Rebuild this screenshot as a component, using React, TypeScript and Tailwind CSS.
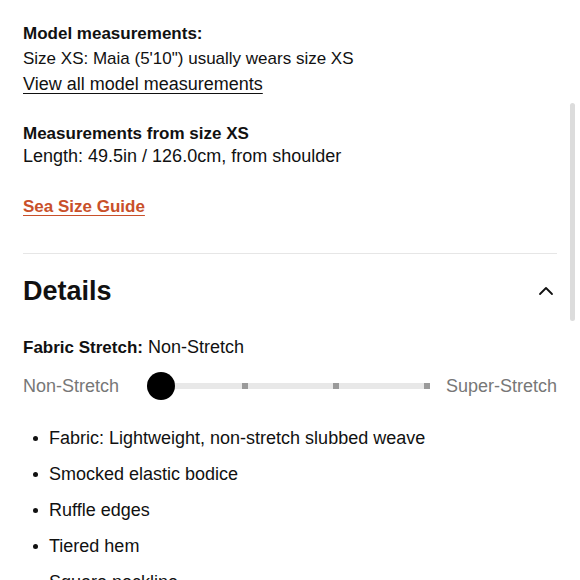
import { ChevronUp } from "lucide-react";

const bullets = [
  "Fabric: Lightweight, non-stretch slubbed weave",
  "Smocked elastic bodice",
  "Ruffle edges",
  "Tiered hem",
  "Square neckline",
];

function StretchSlider() {
  return (
    <div className="flex items-center h-[40px] text-[18px]">
      <span className="text-[#777] w-[137px]">Non-Stretch</span>
      <div className="relative flex-1 h-[28px] flex items-center">
        <div className="absolute left-[2px] right-[1px] h-[6px] bg-[#e8e8e8]" />
        <div className="absolute left-[82px] w-[6px] h-[6px] bg-[#9a9a9a]" />
        <div className="absolute left-[173px] w-[6px] h-[6px] bg-[#9a9a9a]" />
        <div className="absolute right-0 w-[6px] h-[6px] bg-[#9a9a9a]" />
        <div className="relative w-[28px] h-[28px] rounded-full bg-black -ml-[13px]" />
      </div>
      <span className="text-[#777] ml-[16px]">Super-Stretch</span>
    </div>
  );
}

export default function App() {
  return (
    <div className="relative h-[580px] overflow-hidden bg-white text-[#111] text-[18px] leading-[24px] font-['Liberation_Sans',Arial,sans-serif]">
      <div className="px-[23px] pt-[22px]">
        <p className="font-bold text-[17px]">Model measurements:</p>
        <p className="text-[17px] mt-[1px]">Size XS: Maia (5'10") usually wears size XS</p>
        <p className="underline underline-offset-[3px] mt-[1px]">View all model measurements</p>

        <p className="font-bold text-[17px] mt-[26px]">Measurements from size XS</p>
        <p className="-mt-[2px]">Length: 49.5in / 126.0cm, from shoulder</p>

        <p className="mt-[27px] font-bold text-[17px] text-[#c9502a] underline underline-offset-[3px]">Sea Size Guide</p>

        <div className="mt-[34px] border-t border-[#e6e6e6]" />

        <div className="flex items-center justify-between mt-[20px] h-[34px]">
          <h2 className="text-[27px] font-bold">Details</h2>
          <ChevronUp className="w-[24px] h-[24px] -mr-[1px]" strokeWidth={1.8} />
        </div>

        <p className="mt-[27px]">
          <span className="font-bold text-[17px]">Fabric Stretch:</span> Non-Stretch
        </p>

        <div className="mt-[6px]">
          <StretchSlider />
        </div>

        <ul className="mt-[20px] flex flex-col gap-[12px]">
          {bullets.map((b) => (
            <li key={b} className="flex items-center">
              <span className="w-[5px] h-[5px] rounded-full bg-[#111] ml-[10px] mr-[11px]" />
              {b}
            </li>
          ))}
        </ul>
      </div>

      <div className="absolute right-[5px] top-[103px] w-[5px] h-[218px] rounded-full bg-[#dcdcdc]" />
    </div>
  );
}
